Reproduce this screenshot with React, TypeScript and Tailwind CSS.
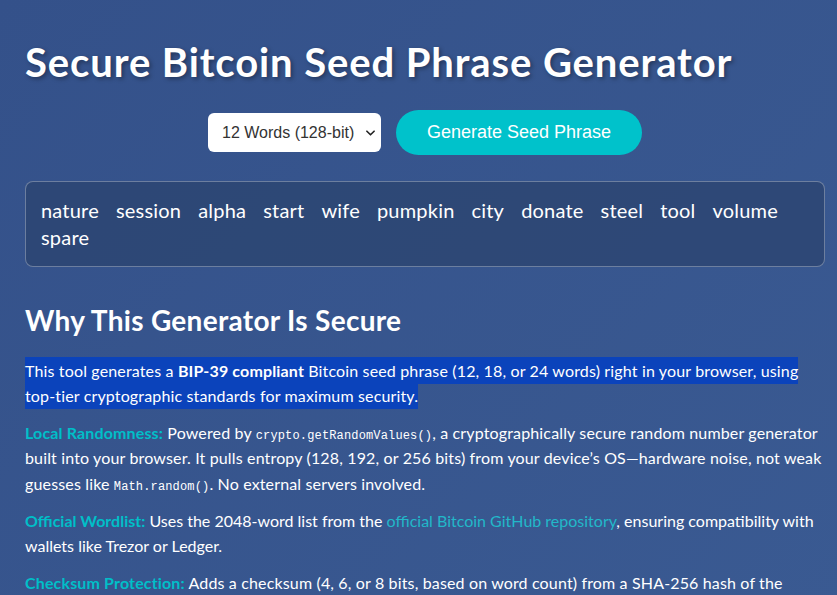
import { useState } from 'react';

// Seed phrase generator – landing layout with word output and security notes

const WORDS = [
  'nature', 'session', 'alpha', 'start', 'wife', 'pumpkin',
  'city', 'donate', 'steel', 'tool', 'volume', 'spare',
];

const FONT = "font-['Segoe_UI',Lato,sans-serif]";
const MONO = "font-['Liberation_Mono',Consolas,monospace] text-[12px] leading-none";

function Chevron() {
  return (
    <svg viewBox="0 0 10 6" className="pointer-events-none absolute right-[6px] top-1/2 h-[6px] w-[9px] -translate-y-1/2">
      <path d="M1 1l4 4 4-4" fill="none" stroke="#222" strokeWidth="1.8" strokeLinecap="round" strokeLinejoin="round" />
    </svg>
  );
}

export default function App() {
  const [count, setCount] = useState('12');

  return (
    <div className={`min-h-[595px] w-full bg-[linear-gradient(135deg,#34518a_0%,#3a5a92_100%)] text-white ${FONT}`}>
      <div className="ml-[25px] w-[800px] pt-[38px]">
        <h1 className="text-[40px] font-bold leading-[1.2] tracking-[0.9px] [text-shadow:2px_2px_4px_rgba(0,0,0,0.35)]">
          Secure Bitcoin Seed Phrase Generator
        </h1>

        {/* controls */}
        <div className="mt-[24px] flex items-center justify-center gap-[15px]">
          <div className="relative">
            <select
              value={count}
              onChange={(e) => setCount(e.target.value)}
              className="h-[39px] w-[173px] appearance-none rounded-[6px] bg-white pl-[14px] pr-[20px] font-['Liberation_Sans',Arial,sans-serif] text-[16px] text-[#333] outline-none"
            >
              <option value="12">12 Words (128-bit)</option>
              <option value="18">18 Words (192-bit)</option>
              <option value="24">24 Words (256-bit)</option>
            </select>
            <Chevron />
          </div>
          <button className="h-[45px] w-[246px] rounded-full bg-[#00c2cb] font-['Liberation_Sans',Arial,sans-serif] text-[18px] text-white">
            Generate Seed Phrase
          </button>
        </div>

        {/* generated words */}
        <div className="mt-[26px] flex flex-wrap gap-x-[17px] rounded-[8px] border border-white/30 bg-[#2c4570]/80 px-[15px] py-[15px] text-[20px] leading-[27px] tracking-[0.2px]">
          {WORDS.map((w) => (
            <span key={w}>{w}</span>
          ))}
        </div>

        <h2 className="mt-[37px] text-[28px] font-bold leading-[1.2] tracking-[0.3px]">Why This Generator Is Secure</h2>

        <div className="mt-[20px] text-[16px] leading-[25.6px] tracking-[0.15px]">
          <p className="mb-[11px]">
            <span className="box-decoration-clone bg-[#0b43bb] py-[4px]">
              This tool generates a <strong>BIP-39 compliant</strong> Bitcoin seed phrase (12, 18, or 24 words) right in your browser, using top-tier cryptographic standards for maximum security.
            </span>
          </p>
          <p className="mb-[11px]">
            <strong className="text-[#00bfc8]">Local Randomness:</strong> Powered by{' '}
            <code className={MONO}>crypto.getRandomValues()</code>, a cryptographically secure random number generator built into your browser. It pulls entropy (128, 192, or 256 bits) from your device’s OS—hardware noise, not weak guesses like{' '}
            <code className={MONO}>Math.random()</code>. No external servers involved.
          </p>
          <p className="mb-[11px] tracking-normal">
            <strong className="text-[#00bfc8]">Official Wordlist:</strong> Uses the 2048-word list from the{' '}
            <a href="#" className="text-[#22b8c9]">official Bitcoin GitHub repository</a>, ensuring compatibility with wallets like Trezor or Ledger.
          </p>
          <p className="mb-[11px]">
            <strong className="text-[#00bfc8]">Checksum Protection:</strong> Adds a checksum (4, 6, or 8 bits, based on word count) from a SHA-256 hash of the entropy, so a mistyped word is caught before you rely on the phrase.
          </p>
        </div>
      </div>
    </div>
  );
}
